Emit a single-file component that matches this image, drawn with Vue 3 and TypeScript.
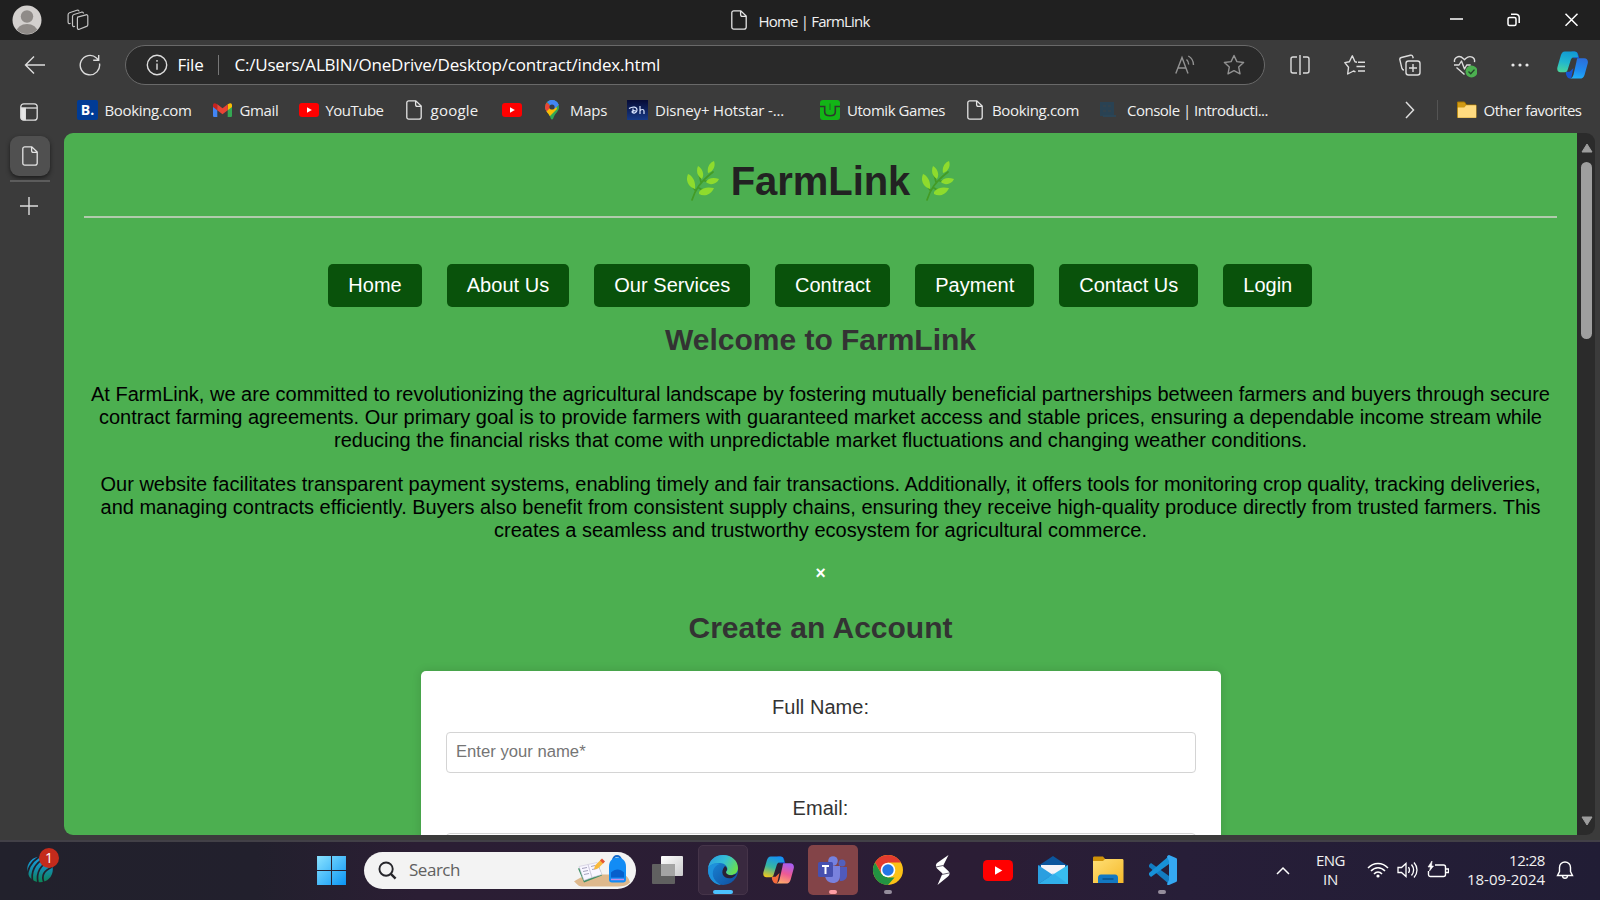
<script setup lang="ts">
import type { Directive } from 'vue'

/* Spreads a line of text over the given width by adjusting its tracking. */
const vFit: Directive<HTMLElement, number> = {
  mounted(el, { value }) {
    const count = (el.textContent ?? '').trim().length
    const range = document.createRange()
    range.selectNodeContents(el)
    const natural = range.getBoundingClientRect().width
    if (count > 0) el.style.letterSpacing = `${(value - natural) / count}px`
  },
}

interface Bookmark {
  icon: string
  label: string
  iconWidth: number
  textWidth: number
  before: number
}

const bookmarks: Bookmark[] = [
  { icon: 'booking', label: 'Booking.com', iconWidth: 27.5, textWidth: 87, before: 0 },
  { icon: 'gmail', label: 'Gmail', iconWidth: 27, textWidth: 39, before: 21 },
  { icon: 'youtube', label: 'YouTube', iconWidth: 27, textWidth: 58, before: 20 },
  { icon: 'file', label: 'google', iconWidth: 25, textWidth: 48, before: 22 },
  { icon: 'youtube', label: '', iconWidth: 21, textWidth: 0, before: 23.5 },
  { icon: 'maps', label: 'Maps', iconWidth: 25, textWidth: 37, before: 22 },
  { icon: 'hotstar', label: 'Disney+ Hotstar -...', iconWidth: 28, textWidth: 129, before: 20 },
  { icon: 'utomik', label: 'Utomik Games', iconWidth: 27, textWidth: 98, before: 36 },
  { icon: 'file', label: 'Booking.com', iconWidth: 25, textWidth: 87, before: 22 },
  { icon: 'console', label: 'Console | Introducti...', iconWidth: 28, textWidth: 141, before: 20 },
]

const navItems = [
  { label: 'Home', width: 93.5, text: 53.5 },
  { label: 'About Us', width: 122.5, text: 82.5 },
  { label: 'Our Services', width: 156, text: 116 },
  { label: 'Contract', width: 115, text: 75.5 },
  { label: 'Payment', width: 119, text: 79 },
  { label: 'Contact Us', width: 139, text: 99 },
  { label: 'Login', width: 89, text: 49 },
]

const paragraphs = [
  [
    { width: 1459, text: 'At FarmLink, we are committed to revolutionizing the agricultural landscape by fostering mutually beneficial partnerships between farmers and buyers through secure' },
    { width: 1443, text: 'contract farming agreements. Our primary goal is to provide farmers with guaranteed market access and stable prices, ensuring a dependable income stream while' },
    { width: 973, text: 'reducing the financial risks that come with unpredictable market fluctuations and changing weather conditions.' },
  ],
  [
    { width: 1440, text: 'Our website facilitates transparent payment systems, enabling timely and fair transactions. Additionally, it offers tools for monitoring crop quality, tracking deliveries,' },
    { width: 1440, text: 'and managing contracts efficiently. Buyers also benefit from consistent supply chains, ensuring they receive high-quality produce directly from trusted farmers. This' },
    { width: 653, text: 'creates a seamless and trustworthy ecosystem for agricultural commerce.' },
  ],
]

const apps = [
  { name: 'tasks', state: '' },
  { name: 'edge', state: 'active' },
  { name: 'copilot', state: '' },
  { name: 'teams', state: 'alert' },
  { name: 'chrome', state: 'running' },
  { name: 'stocks', state: '' },
  { name: 'youtube', state: '' },
  { name: 'mail', state: '' },
  { name: 'explorer', state: '' },
  { name: 'vscode', state: 'running' },
]
</script>

<template>
  <div class="screen">
    <svg class="defs" width="0" height="0">
      <defs>
        <linearGradient id="winGrad" x1="0" y1="0" x2="1" y2="1"><stop offset="0" stop-color="#8ae3ff" /><stop offset="1" stop-color="#0a95f5" /></linearGradient>
        <linearGradient id="cpTeal" x1="0.4" y1="0" x2="0.2" y2="1"><stop offset="0" stop-color="#129cd2" /><stop offset="0.5" stop-color="#21b6cf" /><stop offset="1" stop-color="#4ad69a" /></linearGradient>
        <linearGradient id="cpBlue" x1="0.5" y1="0" x2="0.3" y2="1"><stop offset="0" stop-color="#2a6fdc" /><stop offset="0.6" stop-color="#1f8df0" /><stop offset="1" stop-color="#21b2fa" /></linearGradient>
        <linearGradient id="cpWarm" x1="0.6" y1="0" x2="0.3" y2="1"><stop offset="0" stop-color="#a95df0" /><stop offset="0.5" stop-color="#ee5a94" /><stop offset="1" stop-color="#ffad6a" /></linearGradient>
        <linearGradient id="cpCool" x1="0.5" y1="0" x2="0.2" y2="1"><stop offset="0" stop-color="#1793ef" /><stop offset="0.5" stop-color="#37b6a1" /><stop offset="1" stop-color="#f2c71b" /></linearGradient>
        <linearGradient id="edgeTop" x1="0" y1="0.2" x2="1" y2="0.6"><stop offset="0" stop-color="#2b9fe0" /><stop offset="0.5" stop-color="#35bfd6" /><stop offset="1" stop-color="#6ae04c" /></linearGradient>
        <linearGradient id="edgeLow" x1="0" y1="0" x2="1" y2="1"><stop offset="0" stop-color="#1b8fe0" /><stop offset="1" stop-color="#0f4c9c" /></linearGradient>
        <linearGradient id="ballGrad" gradientUnits="userSpaceOnUse" x1="0" y1="2" x2="0" y2="29"><stop offset="0" stop-color="#15a1e6" /><stop offset="0.5" stop-color="#148ca9" /><stop offset="1" stop-color="#0b8450" /></linearGradient>
        <linearGradient id="folderGrad" x1="0" y1="0" x2="1" y2="1"><stop offset="0" stop-color="#ffdf75" /><stop offset="1" stop-color="#f5b92b" /></linearGradient>
        <linearGradient id="taskGrad" x1="0" y1="0" x2="1" y2="1"><stop offset="0" stop-color="#ffffff" /><stop offset="1" stop-color="#c9c9cb" /></linearGradient>
        <symbol id="file" viewBox="0 0 16 20"><path d="M2.800 .8h7L15.200 6v11a2 2 0 0 1-2 2.200H2.800a2 2 0 0 1-2-2V2.800a2 2 0 0 1 2-2zM9.600 1v3.400c0 1.200.6 1.900 1.800 1.900H15" fill="none" stroke="#e4e4e4" stroke-width="1.300" /></symbol>
        <symbol id="youtube" viewBox="0 0 30 21"><rect width="30" height="21" rx="4.500" fill="#f00" /><path d="M12 6.200v8.600l7.300-4.300z" fill="#fff" /></symbol>
        <symbol id="leaf" viewBox="0 0 34 40">
          <path d="M6 39C9 29 14 21 27 11M9 29C5 24 4 20 4 17M15 21l-2-8M13 27c4 3 7 3 11 3M19 20c4 1 6 0 9-1" fill="none" stroke="#439b25" stroke-width="1.700" stroke-linecap="round" />
          <g fill="#8edb2d"><path d="M2 13c5 2 8 8 7 15C3 26-1 20 2 13zM12 5c4 2 7 8 4 13-5-3-6-8-4-13zM28 0c2 5-1 11-6 12-1-5 1-10 6-12zM20 21c2-4 7-5 13-3-2 5-9 7-13 3zM13 31c4-5 9-5 15-4-3 7-10 9-15 6z" /></g>
        </symbol>
      </defs>
    </svg>

    <header class="titlebar">
      <svg class="avatar" viewBox="0 0 30 30"><clipPath id="av"><circle cx="15" cy="15" r="14" /></clipPath><circle cx="15" cy="15" r="14.500" fill="#d3d0ce" /><g clip-path="url(#av)" fill="#8f8b88"><circle cx="15" cy="11.500" r="6.200" /><ellipse cx="15" cy="27" rx="10.500" ry="8" /></g></svg>
      <svg class="workspaces" viewBox="0 0 22 22" fill="none" stroke="#c4c4c4" stroke-width="1.200" stroke-linejoin="round"><path d="M10.500 8.200l8.500-2.400c1-.3 1.800.2 1.800 1.200v8.700c0 .9-.4 1.400-1.200 1.700l-7.300 2.800c-1.100.4-1.900-.1-1.900-1.200V9.500c0-.7.100-1.100.6-1.300z" /><path d="M8 17.300c-1.500.7-2.500.1-2.500-1.200V7.400c0-1 .5-1.600 1.400-1.900l7.500-2.300c1.200-.3 2 .1 2.100 1.300M3.600 14.300c-1.600.7-2.500.1-2.500-1.200V5.700c0-1 .5-1.600 1.400-1.900l7.400-2.500c1.200-.4 2 .1 2.200 1.200" /></svg>
      <div class="window-title"><svg width="16" height="20"><use href="#file" /></svg><span v-fit="111">Home | FarmLink</span></div>
      <svg class="win-controls" viewBox="0 0 130 16" fill="none" stroke="#fff" stroke-width="1.500"><path d="M0 7h13M115.500 1.800l12 12M127.500 1.800l-12 12" /><rect x="58" y="5.600" width="8" height="8" rx="1.500" /><path d="M61 2.200h5a3.200 3.200 0 0 1 3.200 3.200v5.500" /></svg>
    </header>

    <div class="toolbar">
      <svg class="back" viewBox="0 0 22 20" fill="none" stroke="#ddd" stroke-width="1.400"><path d="M21 10H1.500M10 1.500L1.500 10l8.500 8.500" /></svg>
      <svg class="refresh" viewBox="0 0 22 22" fill="none" stroke="#ddd" stroke-width="1.400"><path d="M20.500 9.500A9.700 9.700 0 1 1 17.500 4l2 1.900M19.700 1v5.300h-5.500" /></svg>
      <div class="address">
        <svg class="info" viewBox="0 0 22 22" fill="none" stroke="#ddd" stroke-width="1.400"><circle cx="11" cy="11" r="9.700" /><path d="M11 9.500v6.300M11 6v1.700" /></svg>
        <span v-fit="26" class="scheme">File</span>
        <i class="bar"></i>
        <span v-fit="425.500" class="url">C:/Users/ALBIN/OneDrive/Desktop/contract/index.html</span>
        <svg class="read" viewBox="0 0 20 20" fill="none" stroke="#929292" stroke-width="1.400"><path d="M.8 18.500L7 2.500l6 16M3 13h8M11.500 4.500c1.500 1.300 2.200 3 2.200 5M13.300 1c3.300 1.800 5.200 5 5.200 9" /></svg>
        <svg class="star" viewBox="0 0 22 22" fill="none" stroke="#929292" stroke-width="1.400" stroke-linejoin="round"><path d="M11 1.500l2.900 6.100 6.700.9-4.900 4.600 1.300 6.700-6-3.200-6 3.200 1.300-6.700L1.400 8.500l6.700-.9z" /></svg>
      </div>
      <div class="tools">
        <svg viewBox="0 0 22 22"><path d="M8 3H4a2 2 0 0 0-2 2v12a2 2 0 0 0 2 2h4M14 3h4a2 2 0 0 1 2 2v12a2 2 0 0 1-2 2h-4M11 1v20" /></svg>
        <svg viewBox="0 0 22 22"><path d="M13 8.200l-2-.4-2.700-6-2.900 6-4.600.8 3.700 4.700-.8 6.700 5.800-3 2 .9M14 8.200h7M12.500 12.500H21M14 17h7" /></svg>
        <svg viewBox="0 0 22 22"><rect x="7" y="7" width="14" height="14" rx="2.500" /><path d="M14 10v8M10 14h8M5 16c-1.200 0-1.800-.6-2.100-1.700L.9 5.800c-.3-1.200.3-2 1.500-2.300l9-2.300c1.400-.3 2.100.3 2.400 1.500l.4 1.500" /></svg>
        <svg viewBox="0 0 24 24"><path d="M1.500 8C.8 3.500 6 .3 10.500 4.800l1 .9 1.200-1.100c4.600-4.300 9.700-.7 8.800 3.600M1 11h5l2.500-4 3 8 2.200-4h4M3.500 13.500l8 7" /><circle cx="18.500" cy="17.500" r="6" fill="#4caf50" stroke="none" /><path d="M15.500 17.600l2.200 2.200 3.800-4.200" stroke="#24452a" /></svg>
        <svg viewBox="0 0 22 22"><g fill="#e8e8e8" stroke="none"><circle cx="4" cy="11" r="1.600" /><circle cx="11" cy="11" r="1.600" /><circle cx="18" cy="11" r="1.600" /></g></svg>
      </div>
      <svg class="copilot" viewBox="0 0 32 28"><path d="M15 0h3c3.500 0 4 3 5 7h-6zM9 21h4l4-4-2 9c-.5 1.500-1 2-2 2-2.500-.3-4-4-4-7z" fill="#1656d2" /><path d="M8 0h10c1.500 0 2.500.7 3 2l1 4h-4c-2.500 0-3.500 1.500-4.200 4L11 19c-.6 2-1.600 2.500-3 2.500H3.500C.8 21.500-.3 19 .5 16L4 4C4.800 1.500 6 0 8 0z" fill="url(#cpTeal)" /><path d="M21 7h7c3 0 4.500 2.500 3.700 5.500L28.500 24c-.8 2.700-2.500 4-5 4H13c2 0 3.400-1.600 4-4l3-13c.5-2 .4-3.200 1-4z" fill="url(#cpBlue)" /></svg>
    </div>

    <div class="bookmarks">
      <svg class="panel" viewBox="0 0 18 20" fill="none" stroke="#e0e0e0" stroke-width="1.300"><rect x=".8" y="1.800" width="16.400" height="16.400" rx="3" /><path d="M1 6h16" /><path d="M1.500 6.500h3.800v11H3a1.500 1.500 0 0 1-1.500-1.500z" fill="#e6e6e6" /></svg>
      <div class="marks">
        <div v-for="(b, i) in bookmarks" :key="i" class="mark" :style="{ marginLeft: b.before + 'px' }">
          <span class="mark-icon" :style="{ width: b.iconWidth + 'px' }">
            <span v-if="b.icon === 'booking'" class="booking">B.</span>
            <svg v-else-if="b.icon === 'gmail'" width="19" height="14" viewBox="0 0 19 14"><path d="M0 2v10.700c0 .7.6 1.300 1.300 1.300h3V5z" fill="#4285f4" /><path d="M19 2v10.700c0 .7-.6 1.300-1.300 1.300h-3V5z" fill="#34a853" /><path d="M14.700 1.300L17 .2c1.200-.3 2 .6 2 1.800v2l-4.300 3.300z" fill="#fbbc04" /><path d="M4.300 1.300L2 .2C.8-.1 0 .8 0 2v2l4.300 3.300z" fill="#c5221f" /><path d="M4.300 1.300L9.500 5.200l5.200-3.900v6L9.500 11.200 4.300 7.300z" fill="#ea4335" /></svg>
            <svg v-else-if="b.icon === 'youtube'" width="20" height="14"><use href="#youtube" /></svg>
            <svg v-else-if="b.icon === 'file'" width="16" height="20"><use href="#file" /></svg>
            <svg v-else-if="b.icon === 'maps'" width="14" height="20" viewBox="0 0 14 20"><clipPath id="pin"><path d="M7 0a7 7 0 0 1 7 7c0 4-3.500 6-5 9.500-.8 2-1 3-2 3s-1.200-1-2-3C3.500 13 0 11 0 7a7 7 0 0 1 7-7z" /></clipPath><g clip-path="url(#pin)"><path d="M0 0h14v20H0z" fill="#34a853" /><path d="M0 0h14v5L7 7z" fill="#4285f4" /><path d="M0 1l7 6-5 6-2-2z" fill="#ea4335" /><path d="M1 12L10 3l2 6-8 8z" fill="#fbbc04" /><path d="M5 0h9v5l-5 4-5-5z" fill="#4285f4" /></g><circle cx="7" cy="7" r="2.600" fill="#343b48" /></svg>
            <span v-else-if="b.icon === 'hotstar'" class="hotstar"><svg width="21" height="20" viewBox="0 0 21 20" fill="none" stroke="#d8e4ff" stroke-width="1.200"><path d="M2 8.500c4-2.500 8-1.500 8 1.500s-4 4-5 2c0-1.500 2-1.500 4-1M6 8.500v4M13 6v8M13 11c1-2 4-2 4 0v3" /></svg></span>
            <svg v-else-if="b.icon === 'utomik'" width="20" height="20" viewBox="0 0 20 20"><rect width="20" height="20" rx="3" fill="#12b516" /><path d="M0 6.500h4.700V12c0 5 10.600 5 10.600 0V6.500H20" fill="none" stroke="#2c3a2c" stroke-width="1.600" /><path d="M10 3.500V10" stroke="#1d7a20" stroke-width="1.400" /></svg>
            <svg v-else width="21" height="18" viewBox="0 0 21 18"><path d="M1 1h14v14H1z" fill="#294253" /><path d="M4 4h3v2H4zM9 4h3v2H9zM4 9h3v2H4zM9 9h3v2H9z" fill="#32424d" /><path d="M4 14h13v2H4z" fill="#2b4556" /></svg>
          </span>
          <span v-if="b.label" v-fit="b.textWidth" :style="{ width: b.textWidth + 'px' }" class="mark-text">{{ b.label }}</span>
        </div>
      </div>
      <svg class="more" viewBox="0 0 10 18" fill="none" stroke="#ddd" stroke-width="1.500"><path d="M1 1l7.500 8L1 17" /></svg>
      <i class="bar dim"></i>
      <svg class="folder" viewBox="0 0 20 18"><path d="M.5 1h7l2 3h9.500v12.500H.5z" fill="#d19a15" stroke="#a87700" /><path d="M.8 6.500h6.500l2-2.200h9.900v12.400H.8z" fill="#ffdb80" /></svg>
      <span v-fit="98">Other favorites</span>
    </div>

    <main class="workspace">
      <aside class="tabs">
        <div class="tab"><svg width="16" height="20"><use href="#file" /></svg></div>
        <i class="tab-line"></i>
        <svg class="plus" viewBox="0 0 18 18" stroke="#ddd" stroke-width="1.400"><path d="M9 0v18M0 9h18" /></svg>
      </aside>
      <section class="page">
        <h1><svg width="34" height="40"><use href="#leaf" /></svg><span v-fit="179.500">FarmLink</span><svg width="34" height="40"><use href="#leaf" /></svg></h1>
        <hr />
        <nav>
          <a v-for="n in navItems" :key="n.label" :style="{ width: n.width + 'px' }"><span v-fit="n.text">{{ n.label }}</span></a>
        </nav>
        <h2><span v-fit="311">Welcome to FarmLink</span></h2>
        <p v-for="(lines, i) in paragraphs" :key="i">
          <span v-for="l in lines" :key="l.text" class="line"><span v-fit="l.width">{{ l.text }}</span></span>
        </p>
        <div class="close">×</div>
        <h2 class="create"><span v-fit="264">Create an Account</span></h2>
        <form>
          <label><span v-fit="97">Full Name:</span></label>
          <input type="text" placeholder="Enter your name*" />
          <label><span v-fit="56">Email:</span></label>
          <input type="email" />
        </form>
      </section>
      <div class="scroll">
        <svg width="12" height="10"><path d="M6 1l5 8H1z" fill="#9d9d9d" stroke="#9d9d9d" stroke-linejoin="round" /></svg>
        <i class="thumb"></i>
        <svg class="down" width="12" height="10"><path d="M6 9l5-8H1z" fill="#9d9d9d" stroke="#9d9d9d" stroke-linejoin="round" /></svg>
      </div>
    </main>

    <footer class="taskbar">
      <div class="widget">
        <svg width="28" height="30" viewBox="0 0 28 30"><circle cx="14" cy="15.500" r="12.800" fill="url(#ballGrad)" /><path d="M1 25C1 15 5 8 13 3M7 29C4 18 9 9 19 4M12 29C10 19 14 10 25 7M18 29c-3-8 0-12 8-16" fill="none" stroke="#22212c" stroke-width="1.700" /></svg>
        <span class="badge">1</span>
      </div>
      <svg class="start" viewBox="0 0 30 30"><path d="M1 1h13.500v13.500H1zM15.500 1H29v13.500H15.500zM1 15.500h13.500V29H1zM15.500 15.500H29V29H15.500z" fill="url(#winGrad)" /></svg>
      <div class="search">
        <svg class="glass" viewBox="0 0 20 20" fill="none" stroke="#26262b" stroke-width="2"><circle cx="8.500" cy="8.500" r="7" /><path d="M13.500 13.500l5 5" stroke-width="2.500" /></svg>
        <span v-fit="51" class="hint">Search</span>
        <svg class="art" viewBox="0 0 58 32"><path d="M0 27c6-4 12-7 22-7h25c6 0 8 4 9 8-3 3-7 4-12 4H8c-4 0-5-3-8-5z" fill="#deb98d" /><path d="M4 14l10-3 8 1 2-3 4 12-18 7z" fill="#3e8e64" /><path d="M5 12l9-2 4 13-8 3zM14 10l9-2 5 12-10 3z" fill="#f8f6ff" stroke="#c9c5d8" stroke-width=".6" /><path d="M8 14l5-1M9 17l5-1M10 20l5-1M17 12l4-1M18 15l5-1" stroke="#a6a2bd" /><path d="M20 15l1-4 6-6 3 3-6 6z" fill="#f8b93c" /><path d="M26 6l2-2 3 3-2 2z" fill="#e45435" /><path d="M39 6c0-6 8-6 8 0" fill="none" stroke="#1266c8" stroke-width="2" /><path d="M35 12c0-12 17-12 17 0v13c0 2-1 3-3 3H38c-2 0-3-1-3-3z" fill="#128cf5" /><path d="M37 18c4-4 9-4 13 0v5H37z" fill="#075fcc" /><path d="M37 25h13" stroke="#c48de8" stroke-width="1.500" /></svg>
      </div>
      <div class="apps">
        <div v-for="a in apps" :key="a.name" class="app">
          <div class="tile" :class="a.state">
            <svg v-if="a.name === 'tasks'" width="32" height="30" viewBox="0 0 32 30"><rect x="9" y="1" width="22" height="20" rx="1" fill="url(#taskGrad)" /><rect x="0" y="9" width="23" height="20" rx="1" fill="#606060" /><path d="M9 9h14v12H9z" fill="#a4a4a4" /></svg>
            <svg v-else-if="a.name === 'edge'" width="32" height="32" viewBox="0 0 32 32"><circle cx="16" cy="16" r="15" fill="url(#edgeLow)" /><path d="M1 15C2 6 8 1 16 1c9 0 15 6 15 13 0 5-4 7-7 7-4 0-6-2-5-3 4-4-1-9-6-9C7 9 2 11 1 15z" fill="url(#edgeTop)" /><path d="M13 10c-5 1-8 6-7 12 1 4 4 7 8 9-5 0-13-5-13-15 1-5 7-8 12-6z" fill="#1e91db" /><path d="M18 12c4 3 1 5 1 6 0 2 3 4 7 3 1 0 3-1 4-2-1 2-3 4-5 5-8 2-13-5-7-12z" fill="#2a2035" /></svg>
            <svg v-else-if="a.name === 'copilot'" width="31" height="28" viewBox="0 0 32 28"><path d="M15 0h3c3.500 0 4 3 5 7h-6z" fill="#164ac9" /><path d="M9 21h4l4-4-2 9c-.5 1.500-1 2-2 2-2.500-.3-4-4-4-7z" fill="#f46a3b" /><path d="M8 0h10c1.500 0 2.500.7 3 2l1 4h-4c-2.500 0-3.500 1.500-4.200 4L11 19c-.6 2-1.600 2.500-3 2.500H3.500C.8 21.500-.3 19 .5 16L4 4C4.800 1.500 6 0 8 0z" fill="url(#cpCool)" /><path d="M21 7h7c3 0 4.500 2.500 3.700 5.500L28.500 24c-.8 2.700-2.500 4-5 4H13c2 0 3.400-1.600 4-4l3-13c.5-2 .4-3.200 1-4z" fill="url(#cpWarm)" /></svg>
            <svg v-else-if="a.name === 'teams'" width="32" height="30" viewBox="0 0 32 30"><circle cx="25" cy="8" r="3.500" fill="#5260bd" /><circle cx="16" cy="6" r="4.800" fill="#7481e0" /><path d="M20 12h10v8c0 4-3 6-7 6z" fill="#505abb" /><path d="M8 11h15v9c0 6-3 8-7 8s-8-3-8-8z" fill="#7981dd" /><rect x="1" y="7" width="15" height="15" rx="1.500" fill="#4650b0" /><path d="M5 11h7M8.500 11v8" stroke="#fff" stroke-width="2" /></svg>
            <svg v-else-if="a.name === 'chrome'" width="32" height="32" viewBox="0 0 32 32"><circle cx="16" cy="16" r="15" fill="#fbc116" /><path d="M3 8.500A15 15 0 0 1 29 8.500H16l-6.500 11z" fill="#e33b2e" /><path d="M3 8.500L9.500 20 16 23.500h6.500L16 31A15 15 0 0 1 3 8.500z" fill="#229342" /><circle cx="16" cy="16" r="7.300" fill="#fff" /><circle cx="16" cy="16" r="5.700" fill="#2376e5" /></svg>
            <svg v-else-if="a.name === 'stocks'" width="16" height="32" viewBox="0 0 16 32"><path d="M13.500 1L2 9c-1.500 1.500-1.500 4 0 5.500l5.500 5L2.500 31 13 22.500c2-1.700 2-4 .3-5.500L8 12z" fill="#fff" /><path d="M1 13l7-1.500M7 20.500l7-1.500" stroke="#2a2035" stroke-width=".7" /></svg>
            <svg v-else-if="a.name === 'youtube'" width="30" height="21"><use href="#youtube" /></svg>
            <svg v-else-if="a.name === 'mail'" width="32" height="30" viewBox="0 0 32 30"><path d="M1 11L16 1l15 10v5H1z" fill="#0b569d" /><path d="M4 10h24v12H4z" fill="#f4f4f8" /><path d="M1 10l15 10L1 29z" fill="#2b9fe0" /><path d="M31 10L1 29h30z" fill="#38bdf0" /><path d="M1 29L16 18l15 11z" fill="#2290df" opacity=".3" /></svg>
            <svg v-else-if="a.name === 'explorer'" width="32" height="28" viewBox="0 0 32 28"><path d="M1 2c0-1 .5-1.500 1.500-1.500H11L14 4h-2v5H1z" fill="#cf9208" /><path d="M1 5h10l2-2h17c1 0 1.500.5 1.500 1.500V27H1z" fill="url(#folderGrad)" /><path d="M6 27v-5c0-2 1-3.500 3-3.500h14c2 0 3 1.500 3 3.500v5z" fill="#1378c2" /><path d="M10.500 23h11" stroke="#07497f" stroke-width="1.200" /></svg>
            <svg v-else width="32" height="32" viewBox="0 0 32 32"><path d="M3 11l2-2 18 13v8L3 13z" fill="#127cc2" /><path d="M3 21l2 2 18-13V2L3 19z" fill="#1791d8" /><path d="M23 1l7 3c.7.300 1 .8 1 1.500v21c0 .7-.3 1.200-1 1.500l-7 3c-1 0-2 0-2-1l2-4V7l-2-4c0-1 1-2 2-2z" fill="#35a8f2" /></svg>
            <i v-if="a.state" class="indicator"></i>
          </div>
        </div>
      </div>
      <div class="tray">
        <svg class="up" viewBox="0 0 14 9" fill="none" stroke="#fff" stroke-width="1.500"><path d="M1 8l6-6 6 6" /></svg>
        <div class="lang"><span v-fit="29">ENG</span><span v-fit="15">IN</span></div>
        <svg class="wifi" viewBox="0 0 22 18" fill="none" stroke="#fff" stroke-width="1.500"><path d="M1 7c5.500-6 14.500-6 20 0M4 10c4-4.500 10-4.500 14 0M7 13c2.300-2.700 5.700-2.700 8 0" /><circle cx="11" cy="15" r="1.600" fill="#fff" stroke="none" /></svg>
        <svg class="sound" viewBox="0 0 22 18" fill="none" stroke="#fff" stroke-width="1.300"><path d="M1 6.500h3.500L9 2.500v13l-4.500-4H1zM11.500 6c1.300 2 1.300 4 0 6M14.500 3.500c2.700 3.500 2.700 7.500 0 11M17 1.500c4 4.500 4 10.500 0 15" /></svg>
        <svg class="battery" viewBox="0 0 22 18" fill="none" stroke="#fff" stroke-width="1.400"><path d="M8 4h8.500c1.200 0 2 .8 2 2v7.500c0 1.200-.8 2-2 2h-13c-1.200 0-2-.8-2-2V10M19 8h2.500v3.500H19" /><path d="M5 0L1 6h2.500L2.500 10l4-5H4.500z" fill="#fff" stroke-width=".6" /></svg>
        <div class="clock"><span v-fit="36">12:28</span><span v-fit="78">18-09-2024</span></div>
        <svg class="bell" viewBox="0 0 18 20" fill="none" stroke="#fff" stroke-width="1.400"><path d="M1.500 15.500l2-4V7.500a5.500 5.500 0 0 1 11 0v4l2 4zM6.500 16c.3 3 4.700 3 5 0" /></svg>
      </div>
    </footer>
  </div>
</template>

<style>
body { margin: 0; overflow: hidden; }
</style>

<style scoped>
* { box-sizing: border-box; }
.screen { width: 1600px; height: 900px; display: flex; flex-direction: column; overflow: hidden; background: #3b3b3b; color: #f0f0f0; font: 15px/20px "Open Sans", "Noto Sans", sans-serif; position: relative; }
.defs { position: absolute; }
svg { display: block; flex: none; }
span { white-space: nowrap; }
i { display: block; flex: none; }
.titlebar { height: 40px; flex: none; background: #202020; display: flex; align-items: center; }
.avatar { width: 30px; height: 30px; margin-left: 12px; }
.workspaces { width: 22px; height: 22px; margin-left: 24.500px; }
.window-title { display: flex; align-items: center; gap: 12px; margin-left: 642px; width: 139px; font-size: 15px; }
.window-title span { padding-top: 1px; }
.win-controls { width: 130px; height: 16px; margin-left: 580px; }
.toolbar { height: 50px; flex: none; display: flex; align-items: center; }
.back { width: 22px; height: 20px; margin-left: 24px; }
.refresh { width: 22px; height: 22px; margin-left: 33px; }
.address { width: 1140px; height: 40px; margin-left: 24px; border: 1px solid #696969; border-radius: 20px; background: #292929; display: flex; align-items: center; font-size: 17px; color: #fff; }
.info { width: 22px; height: 22px; margin-left: 20px; }
.scheme { margin-left: 9.500px; width: 27px; }
.bar { width: 1px; height: 20px; background: #777; }
.scheme + .bar { margin-left: 13px; }
.url { margin-left: 16px; width: 426px; }
.read { width: 20px; height: 20px; margin-left: auto; }
.star { width: 22px; height: 22px; margin: 0 19.500px 0 28px; }
.tools { display: flex; width: 275px; margin: 1px 0 0 7px; }
.tools svg { width: 22px; height: 22px; margin: 0 16.500px; fill: none; stroke: #ddd; stroke-width: 1.400; stroke-linejoin: round; }
.tools svg:nth-child(4) { width: 24px; height: 24px; margin: 0 15.500px; }
.copilot { width: 31px; height: 28px; margin-left: 10px; }
.bookmarks { height: 42.500px; flex: none; display: flex; align-items: center; padding-bottom: 3px; font-size: 15px; }
.panel { width: 18px; height: 20px; margin: 5px 0 0 20px; }
.marks { display: flex; width: 1192px; margin-left: 39px; align-items: center; }
.mark { display: flex; align-items: center; height: 22px; flex: none; }
.mark-icon { display: flex; align-items: center; flex: none; }
.booking { width: 21px; height: 20px; border-radius: 2px; background: #003b95; color: #fff; font: bold 14px/20px "Open Sans", sans-serif; text-align: center; }
.hotstar { background: linear-gradient(#060b35, #173a87); }
.more { width: 10px; height: 18px; margin-left: 135.500px; }
.dim { margin-left: 22.500px; background: #545454; }
.folder { width: 20px; height: 18px; margin: 0 7px 0 18.500px; }
.workspace { height: 707.500px; flex: none; display: flex; }
.tabs { width: 64px; flex: none; padding: 3px 0 0 10px; }
.tab { width: 40px; height: 40px; border-radius: 9px; background: #505050; box-shadow: 0 2px 4px #1c1c1c; display: flex; align-items: center; justify-content: center; }
.tab-line { width: 40px; height: 1.500px; background: #5c5c5c; margin-top: 4.500px; }
.plus { width: 18px; height: 18px; margin: 15px 0 0 10px; }
.page { width: 1513px; height: 702.500px; flex: none; overflow: hidden; background: #4caf50; border-radius: 9px 0 0 9px; padding: 0 20px; font-family: "Liberation Sans", Arial, sans-serif; color: #000; font-size: 20px; text-align: center; }
h1 { margin: 0; height: 83.500px; display: flex; justify-content: center; align-items: center; gap: 11px; padding-top: 14px; font-size: 40px; line-height: 48px; color: #222; }
hr { border: 0; height: 2px; background: #b1cbad; margin: 0; }
nav { display: flex; justify-content: center; gap: 25px; padding-top: 46px; margin-left: -.5px; }
nav a { height: 43px; flex: none; border-radius: 5px; background: #09520b; color: #fff; line-height: 43px; display: flex; justify-content: center; }
h2 { margin: 14.500px 0 25px; font-size: 30px; line-height: 36px; color: #333; }
p { margin: 0 0 20px; line-height: 23.400px; }
p .line { display: flex; justify-content: center; height: 23.400px; }
.close { color: #fff; font-weight: bold; font-size: 17.500px; line-height: 20px; margin-top: 20px; }
.create { margin: 27px 0 25px; }
form { width: 800px; height: 300px; margin: 0 auto; background: #fff; border-radius: 5px; box-shadow: 0 0 10px rgba(0, 0, 0, .14); padding: 25px 25px 0; }
label { display: block; line-height: 23px; color: #333; margin-bottom: 13px; }
input { display: block; width: 750px; height: 41px; border: 1px solid #d4d4d4; border-radius: 4px; padding: 0 9.500px; margin: 0 0 24.500px; font: 16.670px "Liberation Sans", Arial, sans-serif; background: #fff; }
input::placeholder { color: #757575; }
.scroll { width: 18px; height: 702.500px; flex: none; background: #2b2b2b; border-radius: 0 9px 9px 0; padding: 10px 0 9px 3.500px; display: flex; flex-direction: column; }
.thumb { width: 11px; height: 177px; border-radius: 6px; background: #9f9f9f; margin-top: 9px; }
.down { margin-top: auto; }
.taskbar { height: 60px; flex: none; border-top: 2px solid #424047; background: linear-gradient(90deg, #22212c 0, #22202d 16%, #2b1e34 26%, #2b1d35 62%, #271e38 74%, #211d35 100%); display: flex; align-items: center; padding-bottom: 2px; }
.widget { width: 36px; height: 38px; margin: -6px 0 0 26px; position: relative; padding-top: 6px; }
.badge { position: absolute; left: 13px; top: 0; width: 20px; height: 20px; border-radius: 50%; background: #c42b1c; color: #fff; text-align: center; font-size: 14px; line-height: 19px; }
.start { width: 31px; height: 31px; margin-left: 253.500px; }
.search { width: 272px; height: 37px; border-radius: 19px; background: #f3f3f3; margin: 0 0 0 17.500px; display: flex; align-items: center; color: #606060; font-size: 17px; }
.glass { width: 19px; height: 19px; margin: 0 12px 0 14px; }
.hint { width: 51px; }
.art { width: 58px; height: 33px; margin-left: 114px; }
.apps { display: flex; margin-left: 5px; }
.app { width: 54.900px; display: flex; justify-content: center; }
.tile { width: 50px; height: 50px; position: relative; display: flex; justify-content: center; align-items: center; border-radius: 5px; }
.active { background: #39293f; border: 1px solid #453449; }
.alert { background: #834448; }
.indicator { position: absolute; bottom: 1px; left: 21px; width: 8px; height: 4px; border-radius: 2px; background: #958d9c; }
.active .indicator { width: 20px; left: 14px; bottom: 0; background: #4cc2ff; }
.alert .indicator { background: #ff9da4; }
.tray { display: flex; align-items: center; margin-left: auto; margin-right: 26px; }
.up { width: 14px; height: 9px; margin-right: 26px; }
.lang, .clock { display: flex; flex-direction: column; font-size: 15px; line-height: 19.500px; }
.lang { align-items: center; width: 29px; margin-right: 22px; }
.wifi, .sound, .battery { width: 22px; height: 18px; }
.sound { margin-left: 8px; }
.battery { margin-left: 8px; }
.clock { align-items: flex-end; width: 78px; margin-left: 18px; }
.bell { width: 18px; height: 20px; margin-left: 11px; }
</style>
